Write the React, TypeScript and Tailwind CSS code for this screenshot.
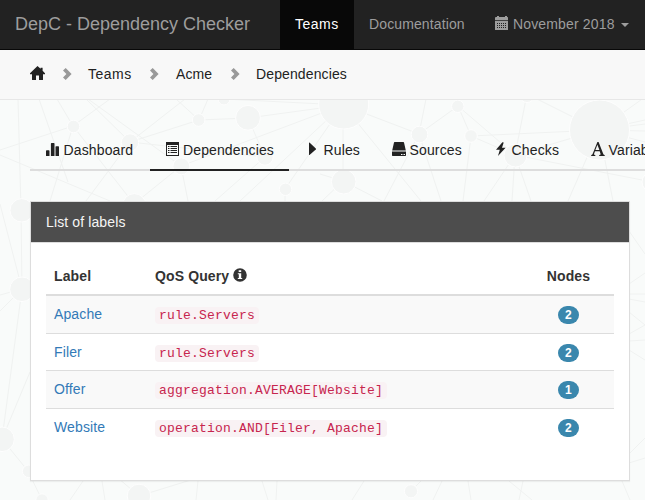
import type { ReactNode } from "react";

function Icon({ children, className = "" }: { children: ReactNode; className?: string }) {
  return (
    <svg viewBox="0 0 14 14" className={`h-[14px] w-[14px] shrink-0 ${className}`} fill="currentColor">
      {children}
    </svg>
  );
}

const HomeIcon = () => (
  <svg viewBox="0 0 15 14" className="h-[14px] w-[15px]" fill="currentColor">
    <path d="M7.5 0 10.6 2.8V1.8h2v3L15 7.3v.9H13v5.3q0 .5-.5.5H9V9.6H6V14H2.5Q2 14 2 13.5V8.2H0v-.9z" />
  </svg>
);
const CalendarIcon = () => (
  <Icon>
    <path d="M0 2Q0 1 1 1h1V0h2v1h6V0h2v1h.5q.5 0 .5 1v2.2H0z" />
    <path fillRule="evenodd" d="M0 5h13v9H0zM2 7v1h1V7zM4 7v1h1V7zM6 7v1h1V7zM8 7v1h1V7zM10 7v1h1V7zM2 9v1h1V9zM4 9v1h1V9zM6 9v1h1V9zM8 9v1h1V9zM10 9v1h1V9zM2 11v1h1v-1zM4 11v1h1v-1zM6 11v1h1v-1zM8 11v1h1v-1zM10 11v1h1v-1z" />
  </Icon>
);
const StatsIcon = () => (
  <Icon>
    <path d="M0 9q0-.7.7-.7h2.1q.7 0 .7.7v5H0zM4.9 1.7q0-.7.7-.7h2.2q.7 0 .7.7V14H4.9zM9.5 5q0-.7.7-.7h2.2q.6 0 .6.7v9H9.5z" />
  </Icon>
);
const ListIcon = () => (
  <Icon>
    <path fillRule="evenodd" d="M0 0h13v14H0zM1 3v10h11V3z" />
    <path d="M2 4h1.5v1H2zM4.5 4H11v1H4.5zM2 6h1.5v1H2zM4.5 6H11v1H4.5zM2 8h1.5v1H2zM4.5 8H11v1H4.5zM2 10h1.5v1H2zM4.5 10H11v1H4.5z" />
  </Icon>
);
const PlayIcon = () => (
  <Icon>
    <path d="M3 .8q0-.6.5-.3L9.8 6.6q.4.4 0 .8L3.5 13q-.5.3-.5-.2z" />
  </Icon>
);
const DriveIcon = () => (
  <Icon>
    <path d="M2.6 0h8.8q.5 0 .6.5L13.8 8.5H.2L2 .5Q2.1 0 2.6 0z" />
    <path fillRule="evenodd" d="M0 9.6h14v3.6q0 .8-.6.8H.6q-.6 0-.6-.8zM9 12v1h1.5v-1zM11.5 12v1H13v-1z" />
  </Icon>
);
const FlashIcon = () => (
  <Icon>
    <path d="M8.4.2 2 7.8h3.8L4 13.9 11.6 5.8H8L9.7.5z" />
  </Icon>
);
const FontIcon = () => (
  <Icon>
    <path fillRule="evenodd" d="M6.4 0h1.2l4.7 12q.3.9 1.4 1v.9H8.2V13q1.7 0 1.4-1L8.7 9.2H4L3 12q-.3 1 1.3 1v.9H.2V13Q1.2 12.8 1.6 12zM6.4 2.8 4.4 8.1h4z" />
  </Icon>
);
const InfoIcon = () => (
  <Icon>
    <path fillRule="evenodd" d="M7 .2A6.8 6.8 0 1 1 7 13.8 6.8 6.8 0 0 1 7 .2zM5.7 2.2v1.9h2.5V2.2zM4.8 5.2v1h1v3.7h-1v1.2h4.4V9.9h-1V5.2z" />
  </Icon>
);
const Chevron = () => (
  <svg viewBox="0 0 9 12" className="h-3 w-[9px] shrink-0 text-[#999]" fill="currentColor">
    <path d="M2.7 0 8.6 6 2.7 12 0 9.4 3.4 6 0 2.6z" />
  </svg>
);

const lines = [
  [18, 99, 21, 210], [39, 99, 68, 182], [57, 99, 73, 126], [73, 126, 110, 99], [73, 126, 0, 150],
  [73, 126, 50, 201], [73, 126, 134, 204], [86, 99, 130, 142], [88, 99, 181, 166], [130, 142, 185, 99],
  [130, 142, 199, 120], [130, 142, 265, 157], [130, 142, 86, 201], [0, 155, 110, 201], [176, 99, 199, 120],
  [199, 120, 208, 99], [199, 120, 248, 118], [181, 166, 343, 105], [181, 166, 188, 201], [181, 166, 134, 204],
  [248, 118, 343, 105], [248, 118, 265, 157], [265, 157, 215, 201], [240, 201, 343, 105], [285, 189, 343, 105],
  [285, 189, 285, 201], [224, 99, 343, 105], [343, 105, 343, 181], [343, 105, 419, 134], [343, 105, 421, 201],
  [426, 99, 419, 134], [419, 134, 458, 106], [458, 106, 471, 136], [458, 106, 515, 155], [471, 136, 599, 130],
  [471, 136, 515, 155], [419, 134, 384, 201], [419, 134, 441, 201], [471, 136, 463, 201], [527, 94, 515, 155],
  [527, 94, 599, 130], [515, 155, 599, 130], [515, 155, 652, 182], [515, 155, 484, 201], [515, 155, 512, 201],
  [515, 155, 531, 201], [599, 130, 568, 201], [599, 130, 613, 201], [343, 181, 382, 201], [343, 181, 322, 201],
  [343, 181, 320, 174], [599, 130, 645, 97], [599, 130, 645, 120], [599, 130, 645, 124], [599, 130, 645, 131],
  [599, 130, 645, 142], [21, 210, 22, 289], [0, 204, 22, 289], [22, 289, 0, 295], [22, 289, 0, 311],
  [22, 289, 2, 439], [30, 372, 2, 439], [2, 439, 28, 471], [28, 471, 42, 500], [83, 481, 70, 500],
  [102, 481, 105, 500], [118, 478, 139, 496], [139, 496, 194, 479], [198, 481, 196, 500], [262, 481, 268, 500],
  [277, 481, 276, 500], [364, 481, 352, 500], [411, 491, 424, 478], [442, 481, 433, 500], [468, 481, 471, 500],
  [509, 481, 532, 500], [523, 481, 519, 500], [622, 481, 630, 500], [629, 231, 645, 254], [629, 284, 645, 273],
  [629, 294, 645, 294], [629, 299, 645, 302], [629, 312, 645, 325], [629, 334, 645, 325], [629, 341, 645, 340],
  [629, 350, 645, 360], [629, 454, 645, 438], [629, 463, 645, 458],
];
const circles = [
  [73.5, 126.5, 6.3], [130, 142.5, 8.7], [198.7, 120, 6.3], [248, 117.8, 12.4], [224, 99, 6], [343.7, 104, 25],
  [181.3, 166.3, 8.4], [265, 157, 8.2], [285.5, 189.3, 6.2], [21.7, 210.3, 11.7], [134.3, 205.3, 11.7], [457.8, 106.3, 6.2],
  [527, 95, 7.5], [419.5, 134.5, 8.3], [471, 136, 6.3], [599.5, 130, 30], [515.5, 155.5, 11.5], [343.7, 181.7, 12.3],
  [652, 182, 10], [22, 289.3, 12.3], [2, 439.3, 12.3], [28.7, 471.3, 6.3], [42, 500, 6.2], [139, 496, 11.8], [411, 491.3, 6.6],
];

function Backdrop() {
  return (
    <svg className="absolute inset-0 h-[500px] w-[645px]" viewBox="0 0 645 500">
      <g stroke="#f0f2f1" strokeWidth="1">
        {lines.map(([x1, y1, x2, y2], i) => (
          <line key={i} x1={x1} y1={y1} x2={x2} y2={y2} />
        ))}
      </g>
      <g fill="#f3f5f4" stroke="#fefefe" strokeWidth="1">
        {circles.map(([cx, cy, r], i) => (
          <circle key={i} cx={cx} cy={cy} r={r} />
        ))}
      </g>
    </svg>
  );
}

const tabs = [
  { name: "Dashboard", icon: <StatsIcon />, width: "w-[120px]" },
  { name: "Dependencies", icon: <ListIcon />, width: "w-[140px]", active: true },
  { name: "Rules", icon: <PlayIcon />, width: "w-[86px]" },
  { name: "Sources", icon: <DriveIcon />, width: "w-[102px]" },
  { name: "Checks", icon: <FlashIcon />, width: "w-[97px]" },
  { name: "Variables", icon: <FontIcon />, width: "w-[120px]" },
];

const rows = [
  { label: "Apache", query: "rule.Servers", nodes: 2, style: "h-[37px] bg-[#f9f9f9]" },
  { label: "Filer", query: "rule.Servers", nodes: 2, style: "h-[37px] border-t border-[#ddd]" },
  { label: "Offer", query: "aggregation.AVERAGE[Website]", nodes: 1, style: "h-[38px] border-t border-[#ddd] bg-[#f9f9f9]" },
  { label: "Website", query: "operation.AND[Filer, Apache]", nodes: 2, style: "h-[38px] border-t border-[#ddd]" },
];

export default function App() {
  return (
    <div className="relative h-[500px] w-[645px] overflow-hidden bg-[#f9fbfa] font-['Liberation_Sans',Arial,sans-serif] text-[14px] leading-5 tracking-[0.12px] whitespace-nowrap text-[#333]">
      <Backdrop />
      <div className="relative">
        <nav className="flex h-[50px] border-b border-[#080808] bg-[#222] text-[#9d9d9d]">
          <div className="w-[280px] pt-[14px] pl-[15px] text-[18px] tracking-normal">DepC - Dependency Checker</div>
          <div className="w-[74px] bg-[#080808] pt-[14px] pl-[15px] tracking-[0.5px] text-white">Teams</div>
          <div className="w-[126px] pt-[14px] pl-[15px]">Documentation</div>
          <div className="flex pt-[14px] pl-[15px]">
            <div className="pt-[2px]"><CalendarIcon /></div>
            <span className="ml-1 tracking-[0.15px]">November 2018</span>
            <span className="mt-[9px] ml-[6px] h-0 w-0 border-x-4 border-t-4 border-x-transparent border-t-[#9d9d9d]" />
          </div>
        </nav>

        <div className="flex h-[50px] items-center border-b border-[#e7e7e7] bg-[#f8f8f8] pb-px pl-[30px] text-[#222]">
          <div className="w-[33px] pb-[2px]"><HomeIcon /></div>
          <Chevron />
          <span className="ml-4 w-[62px] tracking-[0.5px]">Teams</span>
          <Chevron />
          <span className="ml-[17px] w-[55px]">Acme</span>
          <Chevron />
          <span className="ml-4">Dependencies</span>
        </div>

        <div className="mt-[29px] ml-[30px] flex h-[42px] border-b-2 border-[#ddd] text-[#222]">
          {tabs.map((tab) => (
            <div key={tab.name} className={`h-[42px] shrink-0 ${tab.width}`}>
              <div className={`flex h-full pt-[11px] pl-4 ${tab.active ? "mr-px border-b-2 border-[#222]" : ""}`}>
                <div className="pt-[2px]">{tab.icon}</div>
                <span className={tab.active ? "ml-[3px]" : "ml-[3.6px]"}>{tab.name}</span>
              </div>
            </div>
          ))}
        </div>

        <div className="mt-[30px] ml-[30px] h-[280px] w-[600px] border border-[#ddd] bg-white shadow-[0_1px_1px_rgba(0,0,0,0.05)]">
          <div className="h-[41px] border-b border-[#ddd] bg-[#4d4d4d] pt-[10px] pl-[15px] text-[#f5f5f5]">List of labels</div>
          <div className="px-[15px] pt-[15px]">
            <div className="flex h-[38px] border-b-2 border-[#ddd] pt-2 font-bold">
              <div className="w-[109px] pl-2">Label</div>
              <div className="flex flex-1">
                QoS Query
                <div className="ml-1 pt-[2px]"><InfoIcon /></div>
              </div>
              <div className="w-[91px] text-center">Nodes</div>
            </div>
            {rows.map((row) => (
              <div key={row.label} className={`flex ${row.style}`}>
                <div className="w-[109px] pt-2 pl-2 text-[#337ab7]">{row.label}</div>
                <div className="flex-1 pt-[11px]">
                  <code className="block h-[17px] w-fit rounded-[4px] bg-[#f9f2f4] px-1 font-['Liberation_Mono',monospace] text-[13px] leading-[18px] tracking-[0.2px] text-[#c7254e]">
                    {row.query}
                  </code>
                </div>
                <div className="flex w-[91px] justify-center pt-[10px]">
                  <span className="h-[18px] w-[21px] rounded-[10px] bg-[#3a87ad] text-center text-[12px] leading-[18px] font-bold text-white">
                    {row.nodes}
                  </span>
                </div>
              </div>
            ))}
          </div>
        </div>
      </div>
    </div>
  );
}
